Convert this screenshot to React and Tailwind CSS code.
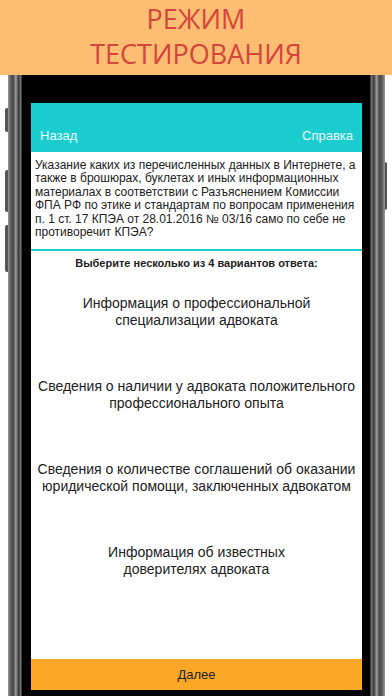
const options = [
  ["Информация о профессиональной", "специализации адвоката"],
  ["Сведения о наличии у адвоката положительного", "профессионального опыта"],
  ["Сведения о количестве соглашений об оказании", "юридической помощи, заключенных адвокатом"],
  ["Информация об известных", "доверителях адвоката"],
];

const edge =
  "bg-[linear-gradient(90deg,#9a9a9a_0%,#5a5a5a_20%,#4a4a4a_40%,#a0a0a0_55%,#3c3c3c_75%,#6e6e6e_90%,#2a2a2a_100%)]";
const edgeRight =
  "bg-[linear-gradient(270deg,#9a9a9a_0%,#5a5a5a_20%,#4a4a4a_40%,#a0a0a0_55%,#3c3c3c_75%,#6e6e6e_90%,#2a2a2a_100%)]";

export default function App() {
  return (
    <div className="w-[392px] h-[696px] bg-white overflow-hidden flex flex-col font-['Liberation_Sans',Arial,sans-serif]">
      {/* promo banner */}
      <div className="h-[75px] shrink-0 bg-[#fdbd73] flex flex-col items-center pt-[1px] font-['Open_Sans',sans-serif] text-[#d4453a] text-[27px] leading-[35px]">
        <div>РЕЖИМ</div>
        <div>ТЕСТИРОВАНИЯ</div>
      </div>

      <div className="flex-1 flex min-h-0">
        {/* left buttons */}
        <div className="w-[8px] shrink-0 flex flex-col items-end">
          <div className="mt-[33px] w-[3px] h-[24px] rounded-l-[2px] bg-[#555]" />
          <div className="mt-[38px] w-[3px] h-[42px] rounded-l-[2px] bg-[#555]" />
          <div className="mt-[13px] w-[3px] h-[47px] rounded-l-[2px] bg-[#555]" />
        </div>

        {/* phone frame */}
        <div className={`w-[14px] shrink-0 ${edge}`} />
        <div className="flex-1 bg-black pl-[9px] pr-[8px] pt-[28px] pb-[6px] flex">
          <div className="flex-1 bg-white flex flex-col">
            <div className="h-[49px] shrink-0 bg-[#1ccdd0] flex items-end justify-between px-[9px] pb-[9px] text-[13px] leading-[15px] text-white/90">
              <span>Назад</span>
              <span>Справка</span>
            </div>

            <div className="px-[4px] pt-[7px] pb-[10px] text-[12px] leading-[13.4px] text-[#222]">
              Указание каких из перечисленных данных в Интернете, а также в брошюрах, буклетах и иных информационных
              материалах в соответствии с Разъяснением Комиссии ФПА РФ по этике и стандартам по вопросам применения
              п. 1 ст. 17 КПЭА от 28.01.2016 № 03/16 само по себе не противоречит КПЭА?
            </div>
            <div className="h-[2px] bg-[#1ccdd0]" />

            <div className="pt-[5px] text-center text-[11px] leading-[14px] font-bold text-[#222]">
              Выберите несколько из 4 вариантов ответа:
            </div>

            <div className="flex flex-col">
              {options.map((lines, i) => (
                <div
                  key={i}
                  className="h-[83px] flex flex-col items-center justify-center text-[14px] leading-[17px] text-[#222] text-center"
                >
                  {lines.map((l) => (
                    <div key={l}>{l}</div>
                  ))}
                </div>
              ))}
            </div>

            <div className="flex-1" />
            <div className="h-[31px] shrink-0 bg-[#fca726] flex items-center justify-center text-[13px] text-[#222]">
              Далее
            </div>
          </div>
        </div>
        <div className={`w-[15px] shrink-0 ${edgeRight}`} />

        {/* right button */}
        <div className="w-[7px] shrink-0 flex flex-col items-start">
          <div className="mt-[87px] w-[2px] h-[48px] rounded-r-[2px] bg-[#555]" />
        </div>
      </div>
    </div>
  );
}
